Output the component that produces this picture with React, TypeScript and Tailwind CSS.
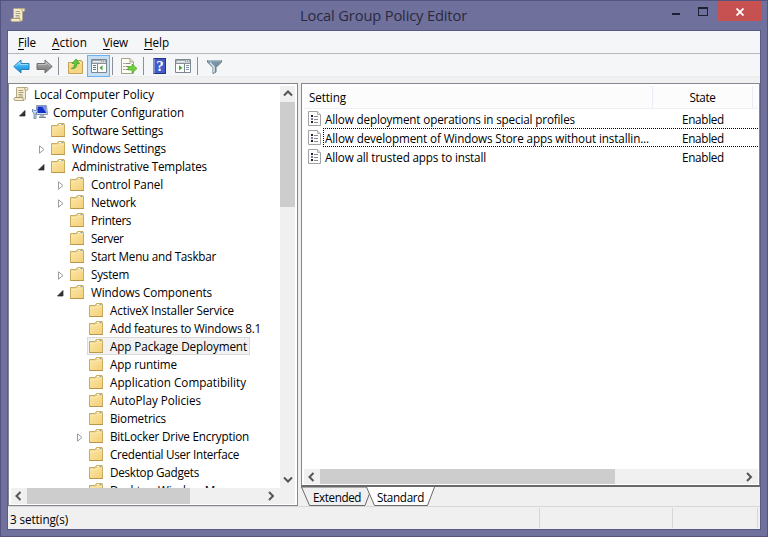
import { useLayoutEffect, useRef, useState } from "react";
import type { ReactNode } from "react";

const FONT = "font-['Open_Sans','Noto_Sans',sans-serif]";

/** Text whose tracking is adjusted so that it fills `w` pixels. */
function Label({ w, children, className = "" }: { w: number; children: ReactNode; className?: string }) {
  const ref = useRef<HTMLSpanElement>(null);
  const [tracking, setTracking] = useState(0);
  useLayoutEffect(() => {
    const el = ref.current;
    if (!el) return;
    const count = (el.textContent ?? "").length;
    setTracking((w - el.getBoundingClientRect().width) / count);
  }, [w]);
  return (
    <span ref={ref} className={`block w-fit shrink-0 whitespace-pre ${className}`} style={{ letterSpacing: tracking }}>
      {children}
    </span>
  );
}

function Scroll({ size = 16 }: { size?: number }) {
  return (
    <svg width={size} height={size} viewBox="0 0 16 16" className="shrink-0">
      <path d="M4 1.5H14C15.3 1.5 15.2 4.5 13.5 4.5H12.5V13L11 14.5H2C.5 14.5.6 11.5 2 11.5H3.5V3C3.5 2 3.5 1.5 4 1.5Z" fill="#f5ecce" stroke="#b5a883" />
      <path d="M12 2C11.5 2.5 11.8 4.5 13.5 4.5M2 11.5H10C10 13 10 14 11 14.5" fill="none" stroke="#a99a70" />
      <path d="M5.5 4.5h4.500M5.500 6.500h5M5.500 8.500h4M5.500 10h4.500" stroke="#9f9881" strokeWidth=".9" />
    </svg>
  );
}

function Folder() {
  return (
    <svg width="15" height="14" viewBox="0 0 15 14" className="shrink-0">
      <defs>
        <linearGradient id="fold" x1="0" y1="0" x2="1" y2="1">
          <stop offset="0" stopColor="#fbe6a4" />
          <stop offset="1" stopColor="#f3d07a" />
        </linearGradient>
      </defs>
      <path d="M.5 2.500H6L7.500.500H13L13.500 2V13.500H.500Z" fill="#e8ca7c" stroke="#c9ab62" />
      <path d="M8 1.500h5" stroke="#fff9e5" />
      <path d="M10.500 1.500h2" stroke="#6ca7b8" />
      <path d="M1 4H6.500L8 3H13V13H1Z" fill="url(#fold)" />
      <path d="M1 4H6.500L8 3H13" fill="none" stroke="#fff3c9" strokeWidth=".7" />
      <path d="M.500 13.500h13.500" stroke="#b9964a" />
    </svg>
  );
}

function Computer() {
  return (
    <svg width="16" height="14" viewBox="0 0 16 14" className="shrink-0">
      <path d="M4.500.500H14.500L15.500 9.500H4.500Z" fill="#d7dde7" stroke="#8b97aa" />
      <path d="M5.500 1.500H13.700L14.300 8H5.500Z" fill="#1530c8" />
      <path d="M10 1.500H13.700L14.300 8Z" fill="#7895f3" />
      <path d="M8 10h4l1 2.500H7Z" fill="#aab2c0" />
      <path d="M7 12.500h7" stroke="#77808e" />
      <path d="M.500 4v3l1.500 1v5.500h2V8L5.500 7V4L4 5.500H2Z" fill="#cddcec" stroke="#567aa7" strokeWidth=".8" />
    </svg>
  );
}

function PolicyIcon() {
  return (
    <svg width="13" height="15" viewBox="0 0 13 15" className="shrink-0">
      <path d="M.500.500H9.500L12.500 3.500V14.500H.500Z" fill="#fdfdfd" stroke="#a2a2a2" />
      <path d="M9.500.500V3.500H12.500" fill="#e8e8e8" stroke="#b0b0b0" />
      <path d="M3 4h2v2H3ZM3 10h2v2H3Z" fill="#222" />
      <path d="M3 7h2v2H3Z" fill="#6b7fa2" />
      <path d="M6 5.500h4M6 8.500h4M6 11.500h4" stroke="#8a8a8a" />
    </svg>
  );
}

function Arrow({ blue }: { blue?: boolean }) {
  const id = blue ? "ab" : "ag";
  return (
    <svg width="17" height="15" viewBox="0 0 17 15" className={blue ? "" : "-scale-x-100"}>
      <defs>
        <linearGradient id={id} x1="0" y1="0" x2="0" y2="1">
          <stop offset="0" stopColor={blue ? "#8bd5fa" : "#b9b9b9"} />
          <stop offset=".5" stopColor={blue ? "#35aef0" : "#919191"} />
          <stop offset="1" stopColor={blue ? "#1680d0" : "#777"} />
        </linearGradient>
      </defs>
      <path d="M.800 7.500L8 1V4.500H16V10.500H8V14Z" fill={`url(#${id})`} stroke={blue ? "#2a80bd" : "#6f6f6f"} />
      <path d="M2.500 7.200L7 3V5.500H15" fill="none" stroke={blue ? "#b8e8fd" : "#cfcfcf"} strokeWidth=".7" />
    </svg>
  );
}

function UpFolder() {
  return (
    <svg width="15" height="16" viewBox="0 0 15 16">
      <path d="M.500 4.500H6L8 2.500H13.500L14.500 4V15.500H.500Z" fill="#f4d684" stroke="#c7a357" />
      <path d="M1.500 6H7L9 5H14" fill="none" stroke="#fff0bd" />
      <path d="M3.300 10.500C5.800 10 6.500 8.300 6.300 5.500H4L8 1L11.500 5.500H9C9.200 9 7 11.200 3.300 10.500Z" fill="#64c738" stroke="#36992a" strokeWidth=".7" />
    </svg>
  );
}

function Pane({ right }: { right?: boolean }) {
  return (
    <svg width="16" height="14" viewBox="0 0 16 14">
      <path d="M.500.500h15v13H.500Z" fill="#fdfdfd" stroke="#7d8790" />
      <path d="M1 1h14v2.500H1Z" fill="#a0a9b0" />
      <path d="M2 2.500h8" stroke="#e8edf0" />
      <path d="M11 2h1M13 2h1" stroke="#fff" />
      <path d="M1 4.500h14" stroke="#899199" />
      {right ? (
        <>
          <path d="M9.500 5v8" stroke="#7d8790" />
          <path d="M11 6.500h3M11 8.500h3M11 10.500h3" stroke="#7695b0" />
          <path d="M4 6.200L7.500 8.800L4 11.500Z" fill="#46a936" />
        </>
      ) : (
        <>
          <path d="M6.500 5v8" stroke="#7d8790" />
          <path d="M2 6.500h3M2 8.500h3M2 10.500h3" stroke="#5f7888" />
          <path d="M11.500 6.200L8.500 8.800L11.500 11.500Z" fill="#46a936" />
        </>
      )}
    </svg>
  );
}

function ExportIcon() {
  return (
    <svg width="17" height="16" viewBox="0 0 17 16">
      <path d="M.500.500H9L12.500 4V15.500H.500Z" fill="#fffdf0" stroke="#a7a28c" />
      <path d="M9 .500V4H12.500" fill="#eee7c9" stroke="#a7a28c" />
      <path d="M2.500 5.500h1M2.500 8.500h1M2.500 11.500h1" stroke="#475578" />
      <path d="M4.500 5.500h5M4.500 8.500h3M4.500 11.500h4" stroke="#888" />
      <path d="M7 8.500H11V6L16 10.500L11 15V12H7Z" fill="#71cf3f" stroke="#4aa22e" strokeWidth=".7" />
    </svg>
  );
}

function HelpIcon() {
  return (
    <span className="flex h-4 w-[13px] items-center justify-center border border-l-2 border-[#26347c] border-l-[#7c8cd5] bg-[#3f5cc8] font-['Liberation_Serif',serif] text-[15px] leading-none font-bold text-white">
      ?
    </span>
  );
}

function Funnel() {
  return (
    <svg width="15" height="15" viewBox="0 0 15 15">
      <path d="M.500 1.500H14.500V3L9 8.500V13L6 14.500V8.500L.500 3Z" fill="#7793a6" stroke="#647985" />
      <path d="M3 3.500L7 8V13.500" fill="none" stroke="#d8e6ee" strokeWidth="1.500" />
      <path d="M1 1.800h13" stroke="#bfd0d9" />
    </svg>
  );
}

const CHEVRONS = {
  up: "M1 6.500L5 2.500L9 6.500",
  down: "M1 2.500L5 6.500L9 2.500",
  left: "M6.500 1L2.500 5L6.500 9",
  right: "M3 1L7 5L3 9",
};

function Chevron({ dir }: { dir: keyof typeof CHEVRONS }) {
  return (
    <svg width="10" height="10" viewBox="0 0 10 10">
      <path d={CHEVRONS[dir]} fill="none" stroke="#555" strokeWidth="2" />
    </svg>
  );
}

type State = "open" | "closed" | "leaf";
const TREE: [string, number, State, number][] = [
  ["Local Computer Policy", 0, "leaf", 120],
  ["Computer Configuration", 1, "open", 131],
  ["Software Settings", 2, "leaf", 91],
  ["Windows Settings", 2, "closed", 94],
  ["Administrative Templates", 2, "open", 135],
  ["Control Panel", 3, "closed", 72],
  ["Network", 3, "closed", 45],
  ["Printers", 3, "leaf", 40],
  ["Server", 3, "leaf", 32.5],
  ["Start Menu and Taskbar", 3, "leaf", 125],
  ["System", 3, "closed", 38],
  ["Windows Components", 3, "open", 121],
  ["ActiveX Installer Service", 4, "leaf", 124],
  ["Add features to Windows 8.1", 4, "leaf", 151],
  ["App Package Deployment", 4, "leaf", 137],
  ["App runtime", 4, "leaf", 67],
  ["Application Compatibility", 4, "leaf", 136],
  ["AutoPlay Policies", 4, "leaf", 91],
  ["Biometrics", 4, "leaf", 56],
  ["BitLocker Drive Encryption", 4, "closed", 139],
  ["Credential User Interface", 4, "leaf", 129],
  ["Desktop Gadgets", 4, "leaf", 89],
  ["Desktop Window Manager", 4, "leaf", 143],
];

const INDENT = ["pl-[3px]", "pl-2", "pl-[27px]", "pl-[46px]", "pl-[65px]"];

function TreeRow({ row: [name, depth, state, w] }: { row: [string, number, State, number] }) {
  const selected = name === "App Package Deployment";
  return (
    <div className={`flex h-[18px] shrink-0 items-center ${INDENT[depth]}`}>
      {depth > 0 && (
        <span className="flex w-[13px] shrink-0 items-center pt-[3px] pl-[2px]">
          {state === "open" && (
            <svg width="7" height="7" viewBox="0 0 7 7">
              <path d="M6 .500V6H.500Z" fill="#333" stroke="#222" strokeWidth=".7" />
            </svg>
          )}
          {state === "closed" && (
            <svg width="6" height="9" viewBox="0 0 6 9" className="ml-px">
              <path d="M.500.800V8.200L5 4.500Z" fill="#fff" stroke="#9b9b9b" />
            </svg>
          )}
        </span>
      )}
      <span
        className={`flex h-[18px] shrink-0 items-center border pr-0.5 ${depth > 0 ? "pl-px" : ""} ${
          selected ? "border-[#dadada] bg-[#f2f2f3]" : "border-transparent"
        }`}
      >
        <span className="flex w-[21px] shrink-0">
          {depth === 0 ? <Scroll /> : depth === 1 ? <Computer /> : <Folder />}
        </span>
        <Label w={w}>{name}</Label>
      </span>
    </div>
  );
}

const SETTINGS: [string, number][] = [
  ["Allow deployment operations in special profiles", 250],
  ["Allow development of Windows Store apps without installin...", 324],
  ["Allow all trusted apps to install", 161],
];

const MENUS: [string, number, string][] = [
  ["File", 18, "w-[34px]"],
  ["Action", 35, "w-[51px]"],
  ["View", 25, "w-[41px]"],
  ["Help", 25, "w-[41px]"],
];

function Divider({ className = "" }: { className?: string }) {
  return <span className={`h-[18px] w-px bg-[#8d9094] ${className}`} />;
}

export default function App() {
  return (
    <div className={`flex h-[537px] w-[768px] flex-col overflow-hidden border border-[#555480] bg-[#70709c] text-[11.7px] leading-4 text-black ${FONT}`}>
      <header className="flex h-[29px] shrink-0">
        <div className="w-[299px] pt-[6px] pl-[9px]">
          <Scroll />
        </div>
        <Label w={167} className="mt-1 text-[14.7px] leading-5 text-[#292a3e]">Local Group Policy Editor</Label>
        <div className="ml-auto flex w-[95px]">
          <span className="mt-[12px] h-[2px] w-2 bg-[#1e1f30]" />
          <span className="mt-[6px] ml-[18px] h-[9px] w-[10px] border border-t-2 border-[#1e1f30]" />
          <span className="mr-[5px] ml-auto flex h-5 w-[45px] items-center justify-center bg-[#c75050]">
            <svg width="8" height="8" viewBox="0 0 8 8" className="mt-px">
              <path d="M.500.500L7.500 7.500M7.500.500L.500 7.500" stroke="#fff" strokeWidth="1.800" />
            </svg>
          </span>
        </div>
      </header>

      <main className="mx-[6px] flex h-[500px] shrink-0 flex-col border border-[#5b5a87] bg-[#f0f0f0]">
        <nav className="flex h-[23px] shrink-0 items-center border-b border-[#b4b7bb] bg-[#f5f6f7] pl-[10px]">
          {MENUS.map(([name, w, cell]) => (
            <span key={name} className={`${cell} shrink-0`}>
              <Label w={w}>
                <span className="underline decoration-1 underline-offset-2">{name[0]}</span>
                {name.slice(1)}
              </Label>
            </span>
          ))}
        </nav>

        <div className="flex h-[23px] shrink-0 items-center border-b border-[#ebecec] bg-[#f5f6f7] pt-[2px] pl-[5px]">
          <Arrow blue />
          <span className="ml-[6px] flex"><Arrow /></span>
          <Divider className="ml-[5px]" />
          <span className="ml-[9px] flex"><UpFolder /></span>
          <span className="ml-1 flex h-[22px] w-[23px] shrink-0 items-center justify-center border border-[#6bb1ec] bg-[#c5dff5]">
            <Pane />
          </span>
          <Divider className="ml-[2px]" />
          <span className="ml-2 flex"><ExportIcon /></span>
          <Divider className="ml-[5px]" />
          <span className="ml-[9px] flex"><HelpIcon /></span>
          <span className="ml-[9px] flex"><Pane right /></span>
          <Divider className="ml-[6px]" />
          <span className="ml-[9px] flex"><Funnel /></span>
        </div>

        <div className="mt-[6px] flex h-[423px] shrink-0">
          <section className="flex w-[290px] shrink-0 flex-col border border-[#828790] bg-white pr-[2px] pb-[2px]">
            <div className="flex h-[404px] shrink-0">
              <div className="flex flex-1 flex-col overflow-hidden pt-px">
                {TREE.map((row) => (
                  <TreeRow key={row[0]} row={row} />
                ))}
              </div>
              <div className="mt-[2px] flex w-[15px] shrink-0 flex-col items-center bg-[#f0f0f0]">
                <span className="flex h-4 items-center"><Chevron dir="up" /></span>
                <span className="h-[105px] w-full bg-[#cdcdcd]" />
                <span className="mt-auto flex h-4 items-center"><Chevron dir="down" /></span>
              </div>
            </div>
            <div className="ml-[2px] flex h-4 shrink-0 items-center bg-[#f0f0f0]">
              <span className="flex w-4 justify-center"><Chevron dir="left" /></span>
              <span className="h-full w-[163px] bg-[#cdcdcd]" />
              <span className="mr-[19px] ml-auto flex"><Chevron dir="right" /></span>
            </div>
          </section>

          <section className="ml-[3px] flex w-[459px] shrink-0 flex-col">
            <div className="flex h-[404px] shrink-0 flex-col border border-b-2 border-[#828790] border-b-[#696969] bg-white pr-px">
              <div className="mt-[2px] ml-[2px] flex h-[23px] shrink-0 items-center border-b border-[#eef0f5] bg-[#fcfcfd]">
                <span className="w-[348px] pl-[5px]"><Label w={37}>Setting</Label></span>
                <span className="flex h-full w-[101px] items-center justify-center border-x border-[#e8ecf3]">
                  <Label w={26}>State</Label>
                </span>
              </div>
              <div className="flex flex-1 flex-col pl-[6px]">
                {SETTINGS.map(([name, w], i) => (
                  <div key={name} className="flex h-[19px] items-center">
                    <PolicyIcon />
                    <span
                      className={`ml-[2px] flex h-[19px] flex-1 items-center border-y border-l pl-px ${
                        i === 1 ? "border-dotted border-black" : "border-transparent"
                      }`}
                    >
                      <span className="w-[357px]"><Label w={w}>{name}</Label></span>
                      <Label w={42}>Enabled</Label>
                    </span>
                  </div>
                ))}
              </div>
              <div className="mb-px ml-[2px] flex h-[15px] shrink-0 items-center bg-[#f0f0f0]">
                <span className="flex w-4 justify-center"><Chevron dir="left" /></span>
                <span className="h-full w-[295px] bg-[#cdcdcd]" />
                <span className="mr-[4px] ml-auto flex"><Chevron dir="right" /></span>
              </div>
            </div>
            <div className="relative flex h-[19px] shrink-0">
              <svg width="138" height="19" viewBox="0 0 138 19" className="absolute top-0 left-0">
                <path d="M.500 0L8.500 18.500H64L71 0Z" fill="#f0f0f0" stroke="#696969" />
                <path d="M65 0L73.500 18.500H126.500L133 0Z" fill="#fff" />
                <path d="M65.500 0L73.500 18.500H126.500L133.500 0" fill="none" stroke="#696969" />
              </svg>
              <span className="relative flex items-center pl-[12px]"><Label w={48}>Extended</Label></span>
              <span className="relative flex items-center pl-[16px]"><Label w={47}>Standard</Label></span>
            </div>
          </section>
        </div>

        <footer className="flex flex-1 items-center border-t border-[#d7d7d7] pl-[2px]">
          <span className="w-[529px] pt-px"><Label w={58}>3 setting(s)</Label></span>
          <span className="h-5 w-[134px] border-x border-[#d7d7d7]" />
          <span className="h-5 w-[85px] border-r border-[#d7d7d7]" />
        </footer>
      </main>
    </div>
  );
}
